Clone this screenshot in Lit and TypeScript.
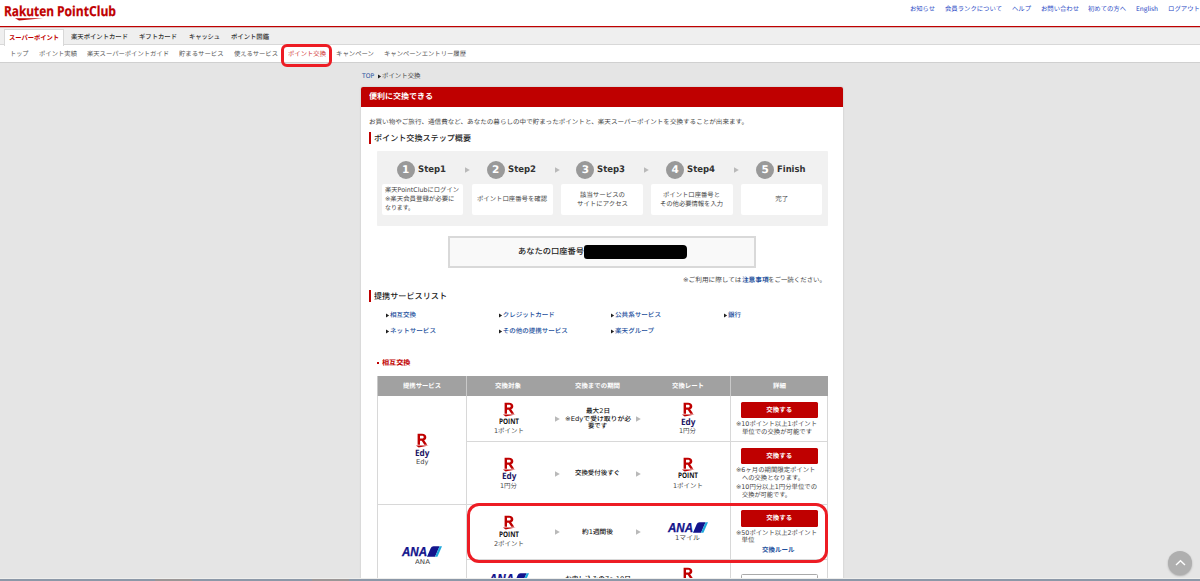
import { LitElement, html, css, svg } from "lit";
import { customElement, property } from "lit/decorators.js";

/** Single line of text condensed or widened to an exact measure. */
@customElement("fit-text")
class FitText extends LitElement {
  @property({ type: Number }) w = 0;
  @property() text = "";
  static styles = css`
    :host { display: inline-block; white-space: nowrap; flex: none; vertical-align: top; text-align: left; }
    .in { display: inline-block; transform-origin: 0 50%; vertical-align: top; }
  `;
  render() { return html`<span class="in">${this.text}</span>`; }
  updated() {
    const s = this.renderRoot.querySelector(".in") as HTMLElement;
    this.style.width = this.w + "px";
    const n = s.getBoundingClientRect().width;
    if (n > 0) s.style.transform = `scaleX(${this.w / n})`;
  }
}

const fit = (text: string, w: number) => html`<fit-text .text=${text} .w=${w}></fit-text>`;

const tri = html`<svg class="tri" width="5" height="6" viewBox="0 0 5 6"><path d="M0 .2 4.8 3 0 5.8z" fill="#b9b9b9"/></svg>`;
const mark = html`<svg class="mark" width="4" height="5" viewBox="0 0 4 5"><path d="M0 .4 3.2 2.5 0 4.6z" fill="#222"/></svg>`;

const rMark = html`<svg class="r" width="14" height="15" viewBox="0 0 14 15">
  ${svg`<path fill="#bf0000" fill-rule="evenodd" d="M2.6.7H7c2.7 0 4.3 1.3 4.3 3.5 0 1.5-.8 2.6-2.1 3.1l3 4.5H9.3L6.7 7.7H5v4.1H2.6zM5 2.8v2.8h1.9c1.1 0 1.8-.5 1.8-1.4s-.7-1.4-1.8-1.4z"/>
  <path fill="#bf0000" d="M1 12.5h12.6L3.6 14.4z"/>`}
</svg>`;

const rLogo = (word: "POINT" | "Edy") => html`<div class="rlogo">${rMark}
  <div class="word ${word === "Edy" ? "edy" : "pt"}">${fit(word, word === "Edy" ? 14.5 : 20)}</div></div>`;

const ana = html`<div class="ana"><span class="anaw">${fit("ANA", 25)}</span>
  <svg width="15" height="11" viewBox="0 0 15 11"><path d="M0 10.8 3.8 2Q4.5.3 6.5.3H12.6L8 10.8z" fill="#13148c"/><path d="M8 10.8 12.6.3H15L10.4 10.8z" fill="#20a8dc"/></svg></div>`;

const button = html`<div class="btn">${fit("交換する", 26)}</div>`;

@customElement("app-root")
class AppRoot extends LitElement {
  static styles = css`
    :host { display: block; }
    * { box-sizing: border-box; }
    .page { position: relative; height: 581px; overflow: hidden; background: #e5e5e5; color: #444;
      font: 6.5px/9px "DejaVu Sans", "Noto Sans CJK JP", sans-serif; text-rendering: geometricPrecision; }
    svg { display: block; flex: none; }
    .top { height: 26px; background: #fff; display: flex; justify-content: space-between; padding-left: 4px; }
    .logo { color: #bf0000; font: 700 13.8px/17px "Open Sans", sans-serif; padding-top: 3px; -webkit-text-stroke: .25px #bf0000; }
    .names { display: flex; gap: 3px; height: 15px; }
    .swoosh { margin-left: 11px; }
    .links { display: flex; gap: 9.8px; padding-top: 4px; color: #2747c4; font-family: "Noto Sans CJK JP", sans-serif; }
    .tabs { height: 19px; border-top: 1px solid #bf0000; background: #efefef; border-bottom: 1px solid #d8d8d8;
      display: flex; padding-left: 4px; color: #333; font-weight: 500; box-shadow: inset 0 1px #d9b5b5; }
    .tab { padding-top: 6px; }
    .tab.on { margin-top: 2px; height: 17px; padding: 4px 4px 0; background: #fff; border: 1px solid #d8d8d8; border-bottom: 0;
      color: #bf0000; font-weight: 700; margin-right: 7px; width: 60px; }
    .tabgap { display: flex; gap: 11.3px; }
    .sub { height: 18px; background: #fff; border-bottom: 1px solid #d0d0d0; display: flex; gap: 10.15px; padding: 5px 0 0 10px; color: #555; }
    .hot { color: #d03030; }
    .crumb { display: flex; align-items: center; height: 9px; margin: 9px 0 6px 362px; }
    .blue { color: #1c4f9c; }
    .crumb .mark { margin: 0 0 0 4px; }
    .panel { margin-left: 361px; width: 482px; height: 500px; background: #fff; box-shadow: 0 0 2px #bbb; border-radius: 2px 2px 0 0; }
    .bar { height: 20px; background: #bf0000; color: #fff; font-weight: 700; font-size: 8px; line-height: 20px; padding-left: 8px; border-radius: 2px 2px 0 0; }
    .intro { padding: 11px 0 0 8px; height: 25px; }
    .h { margin-left: 8px; height: 12px; border-left: 2px solid #bf0000; padding-left: 3px; font-size: 8.2px; line-height: 12px; color: #222; font-weight: 500; }
    .steps { margin: 7px 0 0 16px; width: 451px; height: 75px; background: #f1f1f1; border-radius: 1px; display: flex; gap: 8.55px; padding: 10px 0 0 4.7px; }
    .step { width: 81.3px; }
    .sh { position: relative; display: flex; align-items: center; height: 18px; padding-left: 15px; gap: 3px;
      font: 700 9px/19px "DejaVu Sans", sans-serif; color: #333; }
    .num { width: 18px; height: 18px; border-radius: 50%; background: #999; color: #fff; text-align: center; font-size: 10.5px; line-height: 18px; }
    .sh .tri { position: absolute; left: 83px; top: 6px; }
    .sb { margin-top: 5px; height: 31px; background: #fff; border-radius: 2px; display: flex; flex-direction: column; justify-content: center; align-items: center; }
    .sb.l { align-items: flex-start; padding-left: 3px; }
    .acct { margin: 10px 0 0 87px; width: 308px; height: 32px; border: 2px solid #d9d9d9; background: #f9f9f9;
      display: flex; align-items: center; padding: 0 0 1px 68px; font-size: 8.2px; color: #222; font-weight: 500; }
    .blk { width: 103px; height: 14px; background: #000; border-radius: 3px 4px 4px 3px; }
    .note { display: flex; margin: 8px 0 6px 322px; height: 8px; }
    .note .blue { font-weight: 700; }
    .svc { display: grid; grid-template-columns: repeat(4, 112.7px); grid-auto-rows: 16.5px; margin: 5px 0 0 25px; color: #1c4f9c; font-weight: 500; }
    .svc > div { display: flex; align-items: center; }
    .cat { display: flex; margin: 18px 0 8px 16px; height: 10px; align-items: center; color: #bf0000; font-weight: 700; font-size: 7px; }
    .dot { width: 1.6px; height: 2px; background: #bf0000; margin-right: 3px; }
    .tbl { display: grid; grid-template-columns: 89px 264px 98px; margin-left: 16px; width: 451px; }
    .th { height: 20px; background: #a1a1a1; color: #fff; font-weight: 700; display: flex; justify-content: center; align-items: center; border-left: 1px solid #c9c9c9; }
    .th.m { display: grid; grid-template-columns: 82px 97px 83px; justify-items: center; justify-content: start; }
    .c1, .mid, .det { border-left: 1px solid #d8d8d8; border-bottom: 1px solid #d8d8d8; }
    .det { border-right: 1px solid #d8d8d8; padding: 0 0 0 5px; line-height: 7.5px; }
    .c1 { grid-row: span 2; display: flex; flex-direction: column; align-items: center; justify-content: center; padding-top: 1px; }
    .mid { display: grid; grid-template-columns: 82px 15px 66px 16px 82px; align-items: center; justify-items: center; padding: 1.5px 0 0 .8px; }
    .mid .t { line-height: 7.5px; color: #111; font-weight: 500; text-align: center; display: flex; flex-direction: column; align-items: center; }
    .item { display: flex; flex-direction: column; align-items: center; }
    .pad { height: 9px; }
    .gap { height: 7.5px; }
    .rlogo { display: flex; flex-direction: column; align-items: center; height: 25px; }
    .word { font: 700 7.6px/8px "Open Sans", sans-serif; margin-top: .5px; color: #111; }
    .word.edy { color: #1b1464; font-size: 8.8px; }
    .ana { display: flex; height: 12px; align-items: flex-start; }
    .anaw { color: #13148c; font: italic 700 13px/12px "Liberation Sans", sans-serif; -webkit-text-stroke: .3px #13148c; }
    .btn { width: 76.5px; height: 16.5px; background: #bf0000; border-radius: 1.5px; color: #fff; font-weight: 700; display: flex;
      justify-content: center; align-items: center; margin: 5.5px 0 3px 5px; padding-top: 1px; }
    .btn.off { background: #fff; border: 1px solid #aaa; color: #222; margin-top: 14px; }
    .ln { height: 7.6px; display: flex; }
    .ln.i { padding-left: 5.5px; }
    .ln.g { margin-top: 2px; }
    .rule { padding: 2px 0 0 26px; color: #1c4f9c; font-weight: 700; }
    .ring { position: absolute; border: 3px solid #ed1c24; }
    .ring.a { left: 281px; top: 43.5px; width: 51px; height: 23px; border-radius: 6px; }
    .ring.b { left: 467px; top: 502.5px; width: 361px; height: 60px; border-radius: 12px; }
    .up { position: absolute; left: 1168px; top: 551px; width: 24px; height: 24px; border-radius: 50%; background: #afafaf; box-shadow: 0 1px 2px #aaa; padding: 8px 6.5px; }
    .task { position: absolute; left: 0; bottom: 0; width: 100%; height: 3px; border-top: 1px solid #eeeeec; background: #8c98a8; display: flex; padding-left: 155px; gap: 120px; }
    .task i { width: 37px; background: #9b9696; }
  `;

  render() {
    const step = (n: number, label: string, w: number, lines: [string, number][], last = false) => html`
      <div class="step"><div class="sh"><span class="num">${n}</span>${fit(label, w)}${last ? "" : tri}</div>
      <div class="sb ${n === 1 ? "l" : ""}">${lines.map(([t, x]) => fit(t, x))}</div></div>`;
    const item = (logo: unknown, label = "", w = 0) =>
      html`<div class="item">${logo}${label ? fit(label, w) : html`<div class="pad"></div>`}</div>`;
    const row = (h: number, a: unknown, t: [string, number][], b: unknown, det: unknown, more = false) => html`
      <div class="mid" style="height:${h}px">${a}${tri}<div class="t">${t.map(([s, w]) => fit(s, w))}${more ? html`<div class="gap"></div>` : ""}</div>${tri}${b}</div>
      <div class="det" style="height:${h}px">${det}</div>`;
    const svc: [string, number][] = [["相互交換", 26], ["クレジットカード", 52], ["公共系サービス", 46], ["銀行", 13],
      ["ネットサービス", 46], ["その他の提携サービス", 65], ["楽天グループ", 39]];
    return html`<div class="page">
      <div class="top">
        <div class="logo"><div class="names">${fit("Rakuten", 50)}${fit("PointClub", 59)}</div>
          <svg class="swoosh" width="28" height="3" viewBox="0 0 28 3"><path d="M0 .2h28L4 2.4z" fill="#bf0000"/></svg></div>
        <div class="links">${fit("お知らせ", 25)}${fit("会員ランクについて", 57)}${fit("ヘルプ", 19)}${fit("お問い合わせ", 38)}${fit("初めての方へ", 38)}${fit("English", 22)}${fit("ログアウト", 32)}</div>
      </div>
      <div class="tabs"><div class="tab on">${fit("スーパーポイント", 50)}</div>
        <div class="tab tabgap">${fit("楽天ポイントカード", 57)}${fit("ギフトカード", 38)}${fit("キャッシュ", 31)}${fit("ポイント図鑑", 38)}</div></div>
      <div class="sub">${fit("トップ", 18.5)}${fit("ポイント実績", 38)}${fit("楽天スーパーポイントガイド", 82)}${fit("貯まるサービス", 44.5)}${fit("使えるサービス", 44)}<span class="hot">${fit("ポイント交換", 38)}</span>${fit("キャンペーン", 38)}${fit("キャンペーンエントリー履歴", 82)}</div>
      <div class="crumb"><span class="blue">${fit("TOP", 12)}</span>${mark}${fit("ポイント交換", 38.5)}</div>
      <div class="panel">
        <div class="bar">${fit("便利に交換できる", 64)}</div>
        <div class="intro">${fit("お買い物やご旅行、通信費など、あなたの暮らしの中で貯まったポイントと、楽天スーパーポイントを交換することが出来ます。", 379)}</div>
        <div class="h">${fit("ポイント交換ステップ概要", 97)}</div>
        <div class="steps">
          ${step(1, "Step1", 28, [["楽天PointClubにログイン", 74], ["※楽天会員登録が必要に", 69.5], ["なります。", 29]])}
          ${step(2, "Step2", 28, [["ポイント口座番号を確認", 70]])}
          ${step(3, "Step3", 28, [["該当サービスの", 45], ["サイトにアクセス", 51]])}
          ${step(4, "Step4", 28, [["ポイント口座番号と", 57], ["その他必要情報を入力", 63]])}
          ${step(5, "Finish", 28.5, [["完了", 13]], true)}
        </div>
        <div class="acct">${fit("あなたの口座番号", 66)}<div class="blk"></div></div>
        <div class="note">${fit("※ご利用に際しては", 58.5)}<span class="blue">${fit("注意事項", 26.5)}</span>${fit("をご一読ください。", 58)}</div>
        <div class="h">${fit("提携サービスリスト", 73)}</div>
        <div class="svc">${svc.map(([t, w]) => html`<div>${mark}${fit(t, w)}</div>`)}</div>
        <div class="cat"><span class="dot"></span>${fit("相互交換", 28.5)}</div>
        <div class="tbl">
          <div class="th">${fit("提携サービス", 38)}</div>
          <div class="th m">${fit("交換対象", 26)}${fit("交換までの期間", 45)}${fit("交換レート", 32)}</div>
          <div class="th">${fit("詳細", 13)}</div>
          <div class="c1">${item(rLogo("Edy"), "Edy", 12.5)}</div>
          ${row(46, item(rLogo("POINT"), "1ポイント", 30), [["最大2日", 24], ["※Edyで受け取りが必", 66], ["要です", 19]], item(rLogo("Edy"), "1円分", 17),
            html`${button}<div class="ln">${fit("※10ポイント以上1ポイント", 81)}</div><div class="ln i">${fit("単位での交換が可能です", 70)}</div>`)}
          ${row(62.5, item(rLogo("Edy"), "1円分", 17), [["交換受付後すぐ", 45]], item(rLogo("POINT"), "1ポイント", 30),
            html`${button}<div class="ln">${fit("※6ヶ月の期間限定ポイント", 79.5)}</div><div class="ln i">${fit("への交換となります。", 62)}</div><div class="ln g">${fit("※10円分以上1円分単位での", 81)}</div><div class="ln i">${fit("交換が可能です。", 49)}</div>`)}
          <div class="c1">${item(ana, "ANA", 15)}</div>
          ${row(55, item(rLogo("POINT"), "2ポイント", 30), [["約1週間後", 31]], item(ana, "1マイル", 25),
            html`${button}<div class="ln">${fit("※50ポイント以上2ポイント", 81)}</div><div class="ln i">${fit("単位", 13)}</div><div class="rule">${fit("交換ルール", 32.5)}</div>`)}
          ${row(48, item(ana), [["お申し込みの7〜10日", 66]], html`<div class="item">${rMark}<div class="pad"></div><div class="pad"></div></div>`,
            html`<div class="btn off">${fit("交換する", 26)}</div>`, true)}
        </div>
      </div>
      <div class="ring a"></div>
      <div class="ring b"></div>
      <div class="up"><svg width="11" height="8" viewBox="0 0 11 8"><path d="M1 6 5.5 1.8 10 6" fill="none" stroke="#fff" stroke-width="1.4"/></svg></div>
      <div class="task"><i></i><i></i></div>
    </div>`;
  }
}
